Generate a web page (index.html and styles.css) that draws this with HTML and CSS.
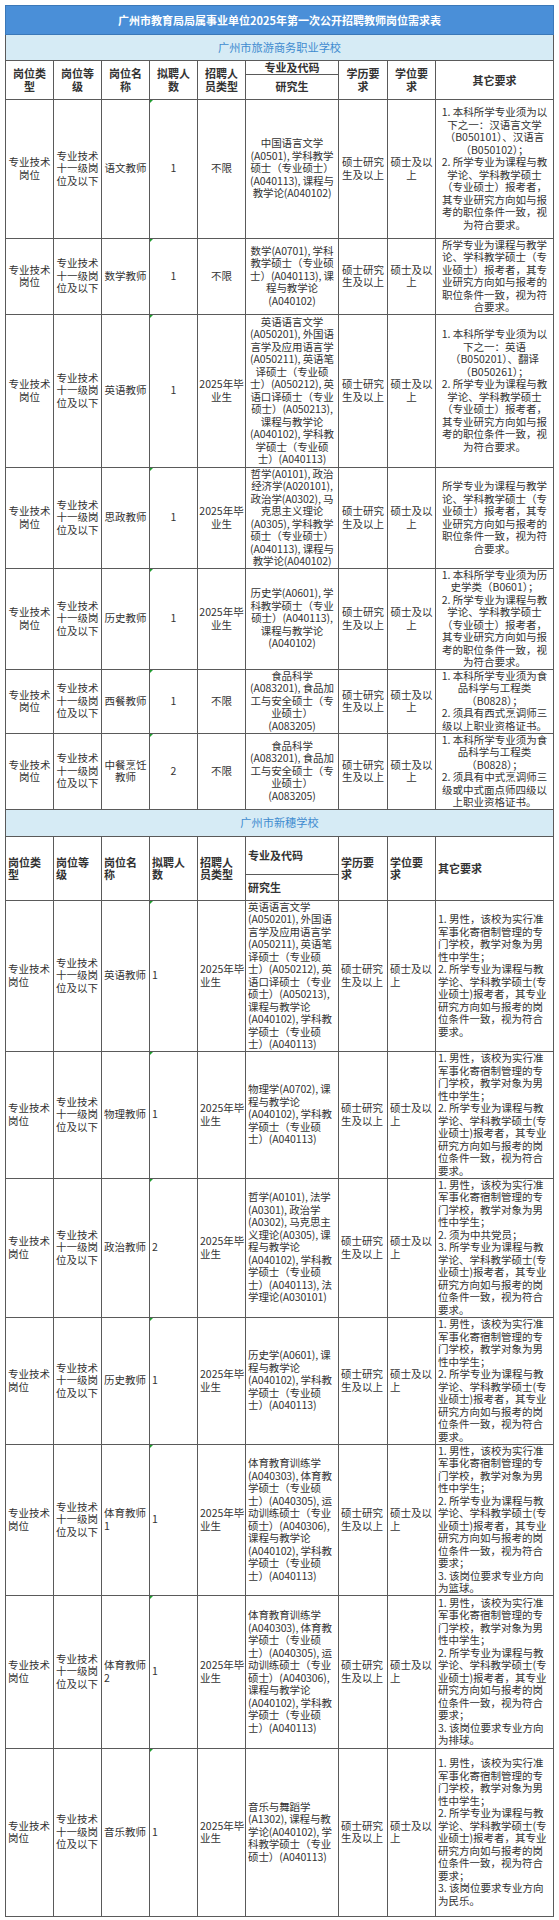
FILE: index.html
```html
<!DOCTYPE html>
<html lang="zh-CN">
<head>
<meta charset="utf-8">
<title>广州市教育局局属事业单位2025年第一次公开招聘教师岗位需求表</title>
<link rel="stylesheet" href="styles.css">
</head>
<body>
<table class="sheet">
  <colgroup>
    <col class="w48"><col class="w48"><col class="w48"><col class="w48"><col class="w48">
    <col class="w93"><col class="w49"><col class="w48"><col class="w118">
  </colgroup>
  <tbody>
    <tr class="h29"><td colspan="9" class="title">广州市教育局局属事业单位2025年第一次公开招聘教师岗位需求表</td></tr>
    <tr class="h26"><td colspan="9" class="band">广州市旅游商务职业学校</td></tr>

    <tr class="h13 c head">
      <td rowspan="2">岗位类<br>型</td>
      <td rowspan="2">岗位等<br>级</td>
      <td rowspan="2">岗位名<br>称</td>
      <td rowspan="2">拟聘人<br>数</td>
      <td rowspan="2">招聘人<br>员类型</td>
      <td class="sub">专业及代码</td>
      <td rowspan="2">学历要<br>求</td>
      <td rowspan="2">学位要<br>求</td>
      <td rowspan="2">其它要求</td>
    </tr>
    <tr class="h25 c head"><td>研究生</td></tr>

    <tr class="h139 c">
      <td>专业技术<br>岗位</td><td>专业技术<br>十一级岗<br>位及以下</td><td>语文教师</td><td class="num">1</td><td>不限</td>
      <td class="major">中国语言文学<br>(A0501), 学科教学<br>硕士（专业硕士）<br>(A040113), 课程与<br>教学论(A040102)</td>
      <td>硕士研究<br>生及以上</td><td>硕士及以<br>上</td>
      <td class="req">1. 本科所学专业须为以<br>下之一：汉语言文学<br>（B050101）、汉语言<br>（B050102）；<br>2. 所学专业为课程与教<br>学论、学科教学硕士<br>（专业硕士）报考者，<br>其专业研究方向如与报<br>考的职位条件一致，视<br>为符合要求。</td>
    </tr>
    <tr class="h76 c">
      <td>专业技术<br>岗位</td><td>专业技术<br>十一级岗<br>位及以下</td><td>数学教师</td><td class="num">1</td><td>不限</td>
      <td class="major">数学(A0701), 学科<br>教学硕士（专业硕<br>士）(A040113), 课<br>程与教学论<br>(A040102)</td>
      <td>硕士研究<br>生及以上</td><td>硕士及以<br>上</td>
      <td class="req">所学专业为课程与教学<br>论、学科教学硕士（专<br>业硕士）报考者，其专<br>业研究方向如与报考的<br>职位条件一致，视为符<br>合要求。</td>
    </tr>
    <tr class="h153 c">
      <td>专业技术<br>岗位</td><td>专业技术<br>十一级岗<br>位及以下</td><td>英语教师</td><td class="num">1</td><td>2025年毕<br>业生</td>
      <td class="major">英语语言文学<br>(A050201), 外国语<br>言学及应用语言学<br>(A050211), 英语笔<br>译硕士（专业硕<br>士）(A050212), 英<br>语口译硕士（专业<br>硕士）(A050213),<br>课程与教学论<br>(A040102), 学科教<br>学硕士（专业硕<br>士）(A040113)</td>
      <td>硕士研究<br>生及以上</td><td>硕士及以<br>上</td>
      <td class="req">1. 本科所学专业须为以<br>下之一：英语<br>（B050201）、翻译<br>（B050261）；<br>2. 所学专业为课程与教<br>学论、学科教学硕士<br>（专业硕士）报考者，<br>其专业研究方向如与报<br>考的职位条件一致，视<br>为符合要求。</td>
    </tr>
    <tr class="h101 c">
      <td>专业技术<br>岗位</td><td>专业技术<br>十一级岗<br>位及以下</td><td>思政教师</td><td class="num">1</td><td>2025年毕<br>业生</td>
      <td class="major">哲学(A0101), 政治<br>经济学(A020101),<br>政治学(A0302), 马<br>克思主义理论<br>(A0305), 学科教学<br>硕士（专业硕士）<br>(A040113), 课程与<br>教学论(A040102)</td>
      <td>硕士研究<br>生及以上</td><td>硕士及以<br>上</td>
      <td class="req">所学专业为课程与教学<br>论、学科教学硕士（专<br>业硕士）报考者，其专<br>业研究方向如与报考的<br>职位条件一致，视为符<br>合要求。</td>
    </tr>
    <tr class="h101 c">
      <td>专业技术<br>岗位</td><td>专业技术<br>十一级岗<br>位及以下</td><td>历史教师</td><td class="num">1</td><td>2025年毕<br>业生</td>
      <td class="major">历史学(A0601), 学<br>科教学硕士（专业<br>硕士）(A040113),<br>课程与教学论<br>(A040102)</td>
      <td>硕士研究<br>生及以上</td><td>硕士及以<br>上</td>
      <td class="req">1. 本科所学专业须为历<br>史学类（B0601）；<br>2. 所学专业为课程与教<br>学论、学科教学硕士<br>（专业硕士）报考者，<br>其专业研究方向如与报<br>考的职位条件一致，视<br>为符合要求。</td>
    </tr>
    <tr class="h64 c">
      <td>专业技术<br>岗位</td><td>专业技术<br>十一级岗<br>位及以下</td><td>西餐教师</td><td class="num">1</td><td>不限</td>
      <td class="major">食品科学<br>(A083201), 食品加<br>工与安全硕士（专<br>业硕士）<br>(A083205)</td>
      <td>硕士研究<br>生及以上</td><td>硕士及以<br>上</td>
      <td class="req">1. 本科所学专业须为食<br>品科学与工程类<br>（B0828）；<br>2. 须具有西式烹调师三<br>级以上职业资格证书。</td>
    </tr>
    <tr class="h75 c">
      <td>专业技术<br>岗位</td><td>专业技术<br>十一级岗<br>位及以下</td><td>中餐烹饪<br>教师</td><td class="num">2</td><td>不限</td>
      <td class="major">食品科学<br>(A083201), 食品加<br>工与安全硕士（专<br>业硕士）<br>(A083205)</td>
      <td>硕士研究<br>生及以上</td><td>硕士及以<br>上</td>
      <td class="req">1. 本科所学专业须为食<br>品科学与工程类<br>（B0828）；<br>2. 须具有中式烹调师三<br>级或中式面点师四级以<br>上职业资格证书。</td>
    </tr>

    <tr class="h27"><td colspan="9" class="band">广州市新穗学校</td></tr>

    <tr class="h38 l head">
      <td rowspan="2">岗位类<br>型</td>
      <td rowspan="2">岗位等<br>级</td>
      <td rowspan="2">岗位名<br>称</td>
      <td rowspan="2">拟聘人<br>数</td>
      <td rowspan="2">招聘人<br>员类型</td>
      <td>专业及代码</td>
      <td rowspan="2">学历要<br>求</td>
      <td rowspan="2">学位要<br>求</td>
      <td rowspan="2">其它要求</td>
    </tr>
    <tr class="h26 l head"><td>研究生</td></tr>

    <tr class="h151 l">
      <td>专业技术<br>岗位</td><td>专业技术<br>十一级岗<br>位及以下</td><td>英语教师</td><td class="num">1</td><td>2025年毕<br>业生</td>
      <td class="major">英语语言文学<br>(A050201), 外国语<br>言学及应用语言学<br>(A050211), 英语笔<br>译硕士（专业硕<br>士）(A050212), 英<br>语口译硕士（专业<br>硕士）(A050213),<br>课程与教学论<br>(A040102), 学科教<br>学硕士（专业硕<br>士）(A040113)</td>
      <td>硕士研究<br>生及以上</td><td>硕士及以<br>上</td>
      <td class="req">1. 男性，该校为实行准<br>军事化寄宿制管理的专<br>门学校，教学对象为男<br>性中学生；<br>2. 所学专业为课程与教<br>学论、学科教学硕士(专<br>业硕士)报考者，其专业<br>研究方向如与报考的岗<br>位条件一致，视为符合<br>要求。</td>
    </tr>
    <tr class="h127 l">
      <td>专业技术<br>岗位</td><td>专业技术<br>十一级岗<br>位及以下</td><td>物理教师</td><td class="num">1</td><td>2025年毕<br>业生</td>
      <td class="major">物理学(A0702), 课<br>程与教学论<br>(A040102), 学科教<br>学硕士（专业硕<br>士）(A040113)</td>
      <td>硕士研究<br>生及以上</td><td>硕士及以<br>上</td>
      <td class="req">1. 男性，该校为实行准<br>军事化寄宿制管理的专<br>门学校，教学对象为男<br>性中学生；<br>2. 所学专业为课程与教<br>学论、学科教学硕士(专<br>业硕士)报考者，其专业<br>研究方向如与报考的岗<br>位条件一致，视为符合<br>要求。</td>
    </tr>
    <tr class="h139 l">
      <td>专业技术<br>岗位</td><td>专业技术<br>十一级岗<br>位及以下</td><td>政治教师</td><td class="num">2</td><td>2025年毕<br>业生</td>
      <td class="major">哲学(A0101), 法学<br>(A0301), 政治学<br>(A0302), 马克思主<br>义理论(A0305), 课<br>程与教学论<br>(A040102), 学科教<br>学硕士（专业硕<br>士）(A040113), 法<br>学理论(A030101)</td>
      <td>硕士研究<br>生及以上</td><td>硕士及以<br>上</td>
      <td class="req">1. 男性，该校为实行准<br>军事化寄宿制管理的专<br>门学校，教学对象为男<br>性中学生；<br>2. 须为中共党员；<br>3. 所学专业为课程与教<br>学论、学科教学硕士(专<br>业硕士)报考者，其专业<br>研究方向如与报考的岗<br>位条件一致，视为符合<br>要求。</td>
    </tr>
    <tr class="h127 l">
      <td>专业技术<br>岗位</td><td>专业技术<br>十一级岗<br>位及以下</td><td>历史教师</td><td class="num">1</td><td>2025年毕<br>业生</td>
      <td class="major">历史学(A0601), 课<br>程与教学论<br>(A040102), 学科教<br>学硕士（专业硕<br>士）(A040113)</td>
      <td>硕士研究<br>生及以上</td><td>硕士及以<br>上</td>
      <td class="req">1. 男性，该校为实行准<br>军事化寄宿制管理的专<br>门学校，教学对象为男<br>性中学生；<br>2. 所学专业为课程与教<br>学论、学科教学硕士(专<br>业硕士)报考者，其专业<br>研究方向如与报考的岗<br>位条件一致，视为符合<br>要求。</td>
    </tr>
    <tr class="h151 l">
      <td>专业技术<br>岗位</td><td>专业技术<br>十一级岗<br>位及以下</td><td>体育教师<br>1</td><td class="num">1</td><td>2025年毕<br>业生</td>
      <td class="major">体育教育训练学<br>(A040303), 体育教<br>学硕士（专业硕<br>士）(A040305), 运<br>动训练硕士（专业<br>硕士）(A040306),<br>课程与教学论<br>(A040102), 学科教<br>学硕士（专业硕<br>士）(A040113)</td>
      <td>硕士研究<br>生及以上</td><td>硕士及以<br>上</td>
      <td class="req">1. 男性，该校为实行准<br>军事化寄宿制管理的专<br>门学校，教学对象为男<br>性中学生；<br>2. 所学专业为课程与教<br>学论、学科教学硕士(专<br>业硕士)报考者，其专业<br>研究方向如与报考的岗<br>位条件一致，视为符合<br>要求；<br>3. 该岗位要求专业方向<br>为篮球。</td>
    </tr>
    <tr class="h153 l">
      <td>专业技术<br>岗位</td><td>专业技术<br>十一级岗<br>位及以下</td><td>体育教师<br>2</td><td class="num">1</td><td>2025年毕<br>业生</td>
      <td class="major">体育教育训练学<br>(A040303), 体育教<br>学硕士（专业硕<br>士）(A040305), 运<br>动训练硕士（专业<br>硕士）(A040306),<br>课程与教学论<br>(A040102), 学科教<br>学硕士（专业硕<br>士）(A040113)</td>
      <td>硕士研究<br>生及以上</td><td>硕士及以<br>上</td>
      <td class="req">1. 男性，该校为实行准<br>军事化寄宿制管理的专<br>门学校，教学对象为男<br>性中学生；<br>2. 所学专业为课程与教<br>学论、学科教学硕士(专<br>业硕士)报考者，其专业<br>研究方向如与报考的岗<br>位条件一致，视为符合<br>要求；<br>3. 该岗位要求专业方向<br>为排球。</td>
    </tr>
    <tr class="h168 l">
      <td>专业技术<br>岗位</td><td>专业技术<br>十一级岗<br>位及以下</td><td>音乐教师</td><td class="num">1</td><td>2025年毕<br>业生</td>
      <td class="major">音乐与舞蹈学<br>(A1302), 课程与教<br>学论(A040102), 学<br>科教学硕士（专业<br>硕士）(A040113)</td>
      <td>硕士研究<br>生及以上</td><td>硕士及以<br>上</td>
      <td class="req">1. 男性，该校为实行准<br>军事化寄宿制管理的专<br>门学校，教学对象为男<br>性中学生；<br>2. 所学专业为课程与教<br>学论、学科教学硕士(专<br>业硕士)报考者，其专业<br>研究方向如与报考的岗<br>位条件一致，视为符合<br>要求；<br>3. 该岗位要求专业方向<br>为民乐。</td>
    </tr>
  </tbody>
</table>
</body>
</html>
```

FILE: styles.css
```css
html, body {
  margin: 0;
  padding: 0;
  background: #ffffff;
}

body {
  padding: 5px 6px 6px 5px;
  font-family: "Noto Sans CJK SC", "Noto Sans", sans-serif;
  color: #333333;
}

.sheet {
  width: 548px;
  border-collapse: collapse;
  table-layout: fixed;
  font-size: 10.5px;
  line-height: 12.5px;
}

.w48 { width: 48px; }
.w49 { width: 49px; }
.w93 { width: 93px; }
.w118 { width: 118px; }

.sheet td {
  border: 1px solid #5a5a5a;
  padding: 0 1px;
  vertical-align: middle;
  white-space: nowrap;
  overflow: visible;
}

.title {
  background: #4a8fd8;
  color: #ffffff;
  font-weight: bold;
  font-size: 11px;
  text-align: center;
  border-color: #3b78b8 !important;
}

.band {
  background: #d6ebf5;
  color: #3f8bd0;
  font-size: 11.2px;
  text-align: center;
  border-top: 1px solid #3b78b8;
}

.c td { text-align: center; }
.l td { text-align: left; padding-left: 2px; }

.head td {
  font-weight: bold;
  font-size: 11px;
}

.num { position: relative; }
.num::before {
  content: "";
  position: absolute;
  left: 0;
  top: 0;
  border-top: 3px solid #1f9d2f;
  border-right: 3px solid transparent;
}

.major { letter-spacing: -0.1px; }

.h13 { height: 13px; }
.h25 { height: 25px; }
.h26 { height: 26px; }
.h27 { height: 27px; }
.h29 { height: 29px; }
.h38 { height: 38px; }
.h64 { height: 64px; }
.h75 { height: 75px; }
.h76 { height: 76px; }
.h101 { height: 101px; }
.h127 { height: 127px; }
.h139 { height: 139px; }
.h151 { height: 151px; }
.h153 { height: 153px; }
.h168 { height: 168px; }
```
